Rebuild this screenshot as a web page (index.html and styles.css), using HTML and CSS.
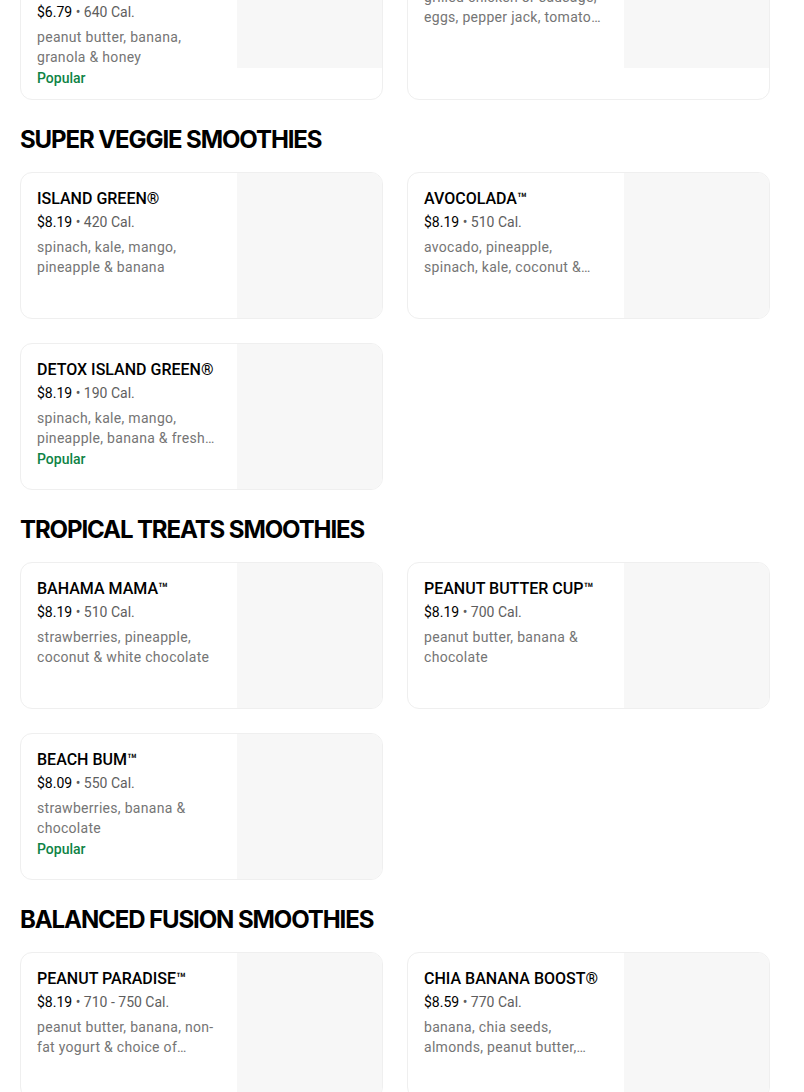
FILE: index.html
```html
<!DOCTYPE html>
<html lang="en">
<head>
  <meta charset="UTF-8">
  <title>Smoothie King – Menu</title>
  <link rel="stylesheet" href="styles.css">
</head>
<body>
  <main class="menu">

    <!-- bowls & wraps (scrolled mostly out of view) -->
    <section class="section">
      <h2 class="section-title">BOWLS &amp; WRAPS</h2>
      <div class="grid">
        <div class="card">
          <div class="card-body">
            <div class="card-title">PEANUT BUTTER GRANOLA BANANA BOWL</div>
            <div class="card-price"><span class="price">$6.79</span> <span class="cal">• 640 Cal.</span></div>
            <div class="card-desc">peanut butter, banana, granola &amp; honey</div>
            <div class="badge">Popular</div>
          </div>
          <div class="card-image"></div>
        </div>
        <div class="card">
          <div class="card-body">
            <div class="card-title">SUNRISE WRAP</div>
            <div class="card-price"><span class="price">$5.49</span> <span class="cal">• 430 Cal.</span></div>
            <div class="card-desc">grilled chicken or sausage, eggs, pepper jack, tomatoes &amp; spinach</div>
          </div>
          <div class="card-image"></div>
        </div>
      </div>
    </section>

    <section class="section">
      <h2 class="section-title">SUPER VEGGIE SMOOTHIES</h2>
      <div class="grid">
        <div class="card">
          <div class="card-body">
            <div class="card-title">ISLAND GREEN®</div>
            <div class="card-price"><span class="price">$8.19</span> <span class="cal">• 420 Cal.</span></div>
            <div class="card-desc">spinach, kale, mango, pineapple &amp; banana</div>
          </div>
          <div class="card-image"></div>
        </div>
        <div class="card">
          <div class="card-body">
            <div class="card-title">AVOCOLADA™</div>
            <div class="card-price"><span class="price">$8.19</span> <span class="cal">• 510 Cal.</span></div>
            <div class="card-desc">avocado, pineapple, spinach, kale, coconut &amp; coconut water</div>
          </div>
          <div class="card-image"></div>
        </div>
        <div class="card">
          <div class="card-body">
            <div class="card-title">DETOX ISLAND GREEN®</div>
            <div class="card-price"><span class="price">$8.19</span> <span class="cal">• 190 Cal.</span></div>
            <div class="card-desc">spinach, kale, mango, pineapple, banana &amp; fresh ginger</div>
            <div class="badge">Popular</div>
          </div>
          <div class="card-image"></div>
        </div>
      </div>
    </section>

    <section class="section">
      <h2 class="section-title">TROPICAL TREATS SMOOTHIES</h2>
      <div class="grid">
        <div class="card">
          <div class="card-body">
            <div class="card-title">BAHAMA MAMA™</div>
            <div class="card-price"><span class="price">$8.19</span> <span class="cal">• 510 Cal.</span></div>
            <div class="card-desc">strawberries, pineapple, coconut &amp; white chocolate</div>
          </div>
          <div class="card-image"></div>
        </div>
        <div class="card">
          <div class="card-body">
            <div class="card-title">PEANUT BUTTER CUP™</div>
            <div class="card-price"><span class="price">$8.19</span> <span class="cal">• 700 Cal.</span></div>
            <div class="card-desc">peanut butter, banana &amp; chocolate</div>
          </div>
          <div class="card-image"></div>
        </div>
        <div class="card">
          <div class="card-body">
            <div class="card-title">BEACH BUM™</div>
            <div class="card-price"><span class="price">$8.09</span> <span class="cal">• 550 Cal.</span></div>
            <div class="card-desc">strawberries, banana &amp; chocolate</div>
            <div class="badge">Popular</div>
          </div>
          <div class="card-image"></div>
        </div>
      </div>
    </section>

    <section class="section">
      <h2 class="section-title">BALANCED FUSION SMOOTHIES</h2>
      <div class="grid">
        <div class="card">
          <div class="card-body">
            <div class="card-title">PEANUT PARADISE™</div>
            <div class="card-price"><span class="price">$8.19</span> <span class="cal">• 710 - 750 Cal.</span></div>
            <div class="card-desc">peanut butter, banana, non-fat yogurt &amp; choice of protein</div>
          </div>
          <div class="card-image"></div>
        </div>
        <div class="card">
          <div class="card-body">
            <div class="card-title">CHIA BANANA BOOST®</div>
            <div class="card-price"><span class="price">$8.59</span> <span class="cal">• 770 Cal.</span></div>
            <div class="card-desc">banana, chia seeds, almonds, peanut butter, dates &amp; protein</div>
          </div>
          <div class="card-image"></div>
        </div>
      </div>
    </section>

  </main>
</body>
</html>
```

FILE: styles.css
```css
body {
  margin: 0;
  background: #fff;
  color: #000;
  font-family: Roboto, "Liberation Sans", sans-serif;
}

/* the page is shown scrolled down a little */
.menu {
  margin-top: -150px;
  padding: 0 34px 0 20px;
}

.section-title {
  margin: 24px 0 16px;
  font-family: Inter, "Liberation Sans", sans-serif;
  font-size: 24px;
  line-height: 32px;
  font-weight: 700;
  letter-spacing: -1.1px;
}

.grid {
  display: grid;
  grid-template-columns: 1fr 1fr;
  gap: 24px;
}

.card {
  display: flex;
  border: 1px solid #efefef;
  border-radius: 12px;
  overflow: hidden;
  background: #fff;
}

.card-body {
  flex: 1;
  min-width: 0;
  padding: 16px 16px 13px;
}

.card-title {
  font-size: 16px;
  line-height: 20px;
  font-weight: 500;
}

.card-price {
  margin-top: 3px;
  font-size: 14px;
  line-height: 20px;
}

.card-price .cal {
  color: #5e5e5e;
}

.card-desc {
  margin-top: 5px;
  font-size: 14px;
  line-height: 20px;
  letter-spacing: 0.3px;
  color: #757575;
  display: -webkit-box;
  -webkit-line-clamp: 2;
  -webkit-box-orient: vertical;
  overflow: hidden;
}

.badge {
  margin-top: 3px;
  font-size: 14px;
  line-height: 16px;
  font-weight: 500;
  color: #0e8345;
}

.card-image {
  flex: none;
  width: 145px;
  height: 145px;
  background: #f7f7f7;
}
```
